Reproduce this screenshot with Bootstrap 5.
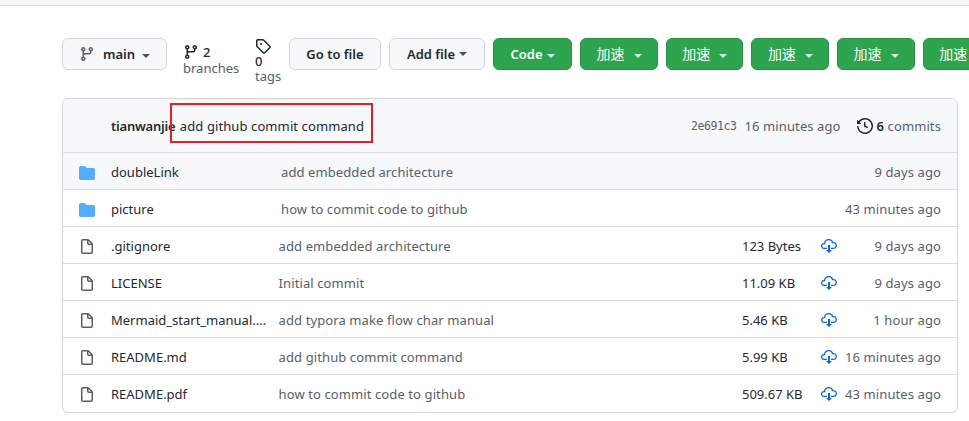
<!DOCTYPE html>
<html lang="en">
<head>
<meta charset="utf-8">
<meta name="viewport" content="width=device-width, initial-scale=1">
<title>Repository files</title>
<link href="https://cdn.jsdelivr.net/npm/bootstrap@5.3.0/dist/css/bootstrap.min.css" rel="stylesheet">
<style>
body{font-family:"Noto Sans","Noto Sans CJK SC",sans-serif;font-size:13px;line-height:20px;color:#24292f;width:969px;height:421px;overflow:hidden}
.top-strip{height:6px;background:#f6f8fa;border-bottom:1px solid #d8dee4}
.toolbar{margin:32px 0 0 62px;height:33px;white-space:nowrap}
.gh-btn{height:32px;padding:0;border:1px solid #d3d8dd;border-radius:6px;background:#f6f8fa;color:#24292f;font-size:13px;line-height:20px;font-weight:600;flex:none;display:flex;align-items:center;justify-content:center}
.gh-btn.green{background:#2da44e;border-color:#2a9147;color:#fff}
.gh-btn.cn{width:77.7px;margin-right:8px;font-size:14px;font-weight:400;justify-content:flex-start;padding-left:15.5px}
.gh-btn.cn .tri{margin-left:9px}
.tri{border:4px solid transparent;border-top-color:currentColor;border-bottom:0;opacity:.8;margin-top:3px}
.main-btn{width:105px}.main-btn .tri{margin-left:-1px}.goto-btn{width:92px}.add-btn{width:96px}.code-btn{width:79px}
.stat{color:#57606a;flex:none}
.stat b{font-weight:500;color:#24292f}
.branches{width:72px;margin-left:16px;padding-top:6px;line-height:16px}
.tags{width:34px;line-height:15px}
.file-box{width:896px;height:315px;margin:27px 0 0 62px;border:1px solid #d0d7de;border-radius:6px;overflow:hidden}
.commit-row{height:53px;background:#f6f8fa;padding:1px 16px 0 48px}
.author{letter-spacing:-.22px}
.headline{margin-left:4.5px;letter-spacing:.1px}
.file-row{height:37px;border-top:1px solid #d8dee4;padding:2px 16px 0;color:#57606a;white-space:nowrap}
.file-row.hovered{background:#f6f8fa}
.cell-icon{width:32px;display:flex;padding-top:1px}
.cell-name{width:167.6px;color:#24292f}
.cell-msg{width:463.4px;letter-spacing:.1px}
.dir .cell-name{width:170px}.dir .cell-msg{width:461px}
.cell-size{width:79px;color:#24292f}
.age{letter-spacing:.1px}
.muted{color:#57606a}
.sha{font:11.5px "DejaVu Sans Mono",monospace;letter-spacing:-.4px}
.hist{margin-left:16px}
.red-frame{position:absolute;left:170px;top:103px;width:203px;height:40px;border:2px solid #ed1c24}
svg{fill:currentColor;flex:none}
</style>
</head>
<body class="bg-white position-relative">
<svg class="d-none">
<symbol id="branch" viewBox="0 0 16 16"><path fill-rule="evenodd" d="M11.75 2.5a.75.75 0 100 1.5.75.75 0 000-1.5zm-2.25.75a2.25 2.25 0 113 2.122V6A2.5 2.5 0 0110 8.5H6a1 1 0 00-1 1v1.128a2.251 2.251 0 11-1.5 0V5.372a2.25 2.25 0 111.5 0v1.836A2.492 2.492 0 016 7h4a1 1 0 001-1v-.628A2.25 2.25 0 019.5 3.25zM4.25 12a.75.75 0 100 1.5.75.75 0 000-1.5zM3.5 3.25a.75.75 0 111.5 0 .75.75 0 01-1.5 0z"/></symbol>
<symbol id="tag" viewBox="0 0 16 16"><path fill-rule="evenodd" d="M2.5 7.775V2.75a.25.25 0 01.25-.25h5.025a.25.25 0 01.177.073l6.25 6.25a.25.25 0 010 .354l-5.025 5.025a.25.25 0 01-.354 0l-6.25-6.25a.25.25 0 01-.073-.177zm-1.5 0V2.75C1 1.784 1.784 1 2.75 1h5.025c.464 0 .91.184 1.238.513l6.25 6.25a1.75 1.75 0 010 2.474l-5.026 5.026a1.75 1.75 0 01-2.474 0l-6.25-6.25A1.75 1.75 0 011 7.775zM6 5a1 1 0 100 2 1 1 0 000-2z"/></symbol>
<symbol id="history" viewBox="0 0 16 16"><path fill-rule="evenodd" d="M1.643 3.143L.427 1.927A.25.25 0 000 2.104V5.75c0 .138.112.25.25.25h3.646a.25.25 0 00.177-.427L2.715 4.215a6.5 6.5 0 11-1.18 4.458.75.75 0 10-1.493.154 8.001 8.001 0 101.6-5.684zM7.75 4a.75.75 0 01.75.75v2.992l2.028.812a.75.75 0 01-.557 1.392l-2.5-1A.75.75 0 017 8.25v-3.5A.75.75 0 017.75 4z"/></symbol>
<symbol id="folder" viewBox="0 0 16 16"><path d="M1.75 1A1.75 1.75 0 000 2.75v10.5C0 14.216.784 15 1.75 15h12.5A1.75 1.75 0 0016 13.25v-8.5A1.75 1.75 0 0014.25 3h-6.5a.25.25 0 01-.2-.1l-.9-1.2c-.33-.44-.85-.7-1.4-.7h-3.5z"/></symbol>
<symbol id="file" viewBox="0 0 16 16"><path fill-rule="evenodd" d="M3.75 1.5a.25.25 0 00-.25.25v11.5c0 .138.112.25.25.25h8.5a.25.25 0 00.25-.25V6H9.75A1.75 1.75 0 018 4.25V1.5H3.75zm5.75.56v2.19c0 .138.112.25.25.25h2.19L9.5 2.06zM2 1.75C2 .784 2.784 0 3.75 0h5.086c.464 0 .909.184 1.237.513l3.414 3.414c.329.328.513.773.513 1.237v8.086A1.75 1.75 0 0112.25 15h-8.5A1.75 1.75 0 012 13.25V1.75z"/></symbol>
<symbol id="cloud" viewBox="0 0 16 16"><path d="M9 12h2l-3 3-3-3h2V7h2v5zm3-8c0-.44-.91-3-4.5-3C5.08 1 3 2.92 3 5 1.02 5 0 6.52 0 8c0 1.53 1 3 3 3h3V9.7H3C1.38 9.7 1.3 8.28 1.3 8c0-.17.05-1.7 1.7-1.7h1.3V5c0-1.39 1.56-2.7 3.2-2.7 2.55 0 3.13 1.55 3.2 1.8v1.2H12c.81 0 2.7.22 2.7 2.2 0 2.09-2.25 2.2-2.7 2.2h-2V11h2c2.08 0 4-1.16 4-3.5C16 5.06 14.08 4 12 4z"/></symbol>
</svg>
<div class="top-strip"></div>
<div class="toolbar d-flex">
  <button class="btn gh-btn main-btn"><svg class="muted" width="16" height="16"><use href="#branch"/></svg><span class="ms-2 me-2">main</span><i class="tri"></i></button>
  <div class="stat branches"><div class="d-flex"><svg class="text-dark" width="16" height="16"><use href="#branch"/></svg><b class="ms-1">2</b></div><div>branches</div></div>
  <div class="stat tags"><svg class="text-dark d-block" width="16" height="16"><use href="#tag"/></svg><b class="d-block">0</b><div>tags</div></div>
  <button class="btn gh-btn goto-btn me-2">Go to file</button>
  <button class="btn gh-btn add-btn me-2">Add file<i class="tri ms-1 mt-0"></i></button>
  <button class="btn gh-btn green code-btn me-2">Code<i class="tri ms-1"></i></button>
  <button class="btn gh-btn green cn">加速<i class="tri"></i></button>
  <button class="btn gh-btn green cn">加速<i class="tri"></i></button>
  <button class="btn gh-btn green cn">加速<i class="tri"></i></button>
  <button class="btn gh-btn green cn">加速<i class="tri"></i></button>
  <button class="btn gh-btn green cn">加速<i class="tri"></i></button>
</div>
<div class="file-box">
  <div class="commit-row d-flex align-items-center">
    <span class="author fw-semibold">tianwanjie</span><span class="headline">add github commit command</span>
    <span class="sha muted ms-auto">2e691c3</span><span class="muted ms-2 age">16 minutes ago</span>
    <svg class="hist" width="16" height="16"><use href="#history"/></svg><span class="ms-1 muted age"><b class="fw-semibold text-dark">6</b> commits</span>
  </div>
  <div class="file-row dir hovered d-flex align-items-center"><span class="cell-icon"><svg width="16" height="16" color="#54aeff"><use href="#folder"/></svg></span><span class="cell-name">doubleLink</span><span class="cell-msg">add embedded architecture</span><span class="age ms-auto">9 days ago</span></div>
  <div class="file-row dir d-flex align-items-center"><span class="cell-icon"><svg width="16" height="16" color="#54aeff"><use href="#folder"/></svg></span><span class="cell-name">picture</span><span class="cell-msg">how to commit code to github</span><span class="age ms-auto">43 minutes ago</span></div>
  <div class="file-row d-flex align-items-center"><span class="cell-icon"><svg width="16" height="16"><use href="#file"/></svg></span><span class="cell-name">.gitignore</span><span class="cell-msg">add embedded architecture</span><span class="cell-size">123 Bytes</span><svg width="16" height="16" color="#0969da"><use href="#cloud"/></svg><span class="age ms-auto">9 days ago</span></div>
  <div class="file-row d-flex align-items-center"><span class="cell-icon"><svg width="16" height="16"><use href="#file"/></svg></span><span class="cell-name">LICENSE</span><span class="cell-msg">Initial commit</span><span class="cell-size">11.09 KB</span><svg width="16" height="16" color="#0969da"><use href="#cloud"/></svg><span class="age ms-auto">9 days ago</span></div>
  <div class="file-row d-flex align-items-center"><span class="cell-icon"><svg width="16" height="16"><use href="#file"/></svg></span><span class="cell-name">Mermaid_start_manual....</span><span class="cell-msg">add typora make flow char manual</span><span class="cell-size">5.46 KB</span><svg width="16" height="16" color="#0969da"><use href="#cloud"/></svg><span class="age ms-auto">1 hour ago</span></div>
  <div class="file-row d-flex align-items-center"><span class="cell-icon"><svg width="16" height="16"><use href="#file"/></svg></span><span class="cell-name">README.md</span><span class="cell-msg">add github commit command</span><span class="cell-size">5.99 KB</span><svg width="16" height="16" color="#0969da"><use href="#cloud"/></svg><span class="age ms-auto">16 minutes ago</span></div>
  <div class="file-row d-flex align-items-center"><span class="cell-icon"><svg width="16" height="16"><use href="#file"/></svg></span><span class="cell-name">README.pdf</span><span class="cell-msg">how to commit code to github</span><span class="cell-size">509.67 KB</span><svg width="16" height="16" color="#0969da"><use href="#cloud"/></svg><span class="age ms-auto">43 minutes ago</span></div>
</div>
<div class="red-frame"></div>
<script src="https://cdn.jsdelivr.net/npm/bootstrap@5.3.0/dist/js/bootstrap.bundle.min.js"></script>
</body>
</html>
